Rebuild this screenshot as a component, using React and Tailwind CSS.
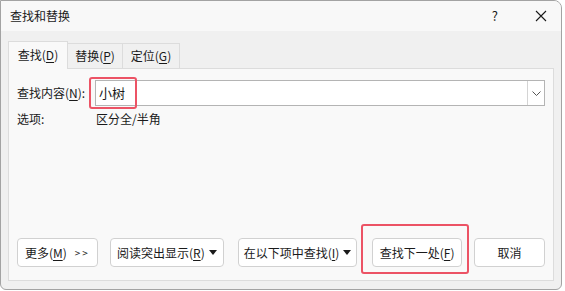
import React from "react";

const font = { fontFamily: '"Microsoft YaHei UI", "Noto Sans CJK SC", "Noto Sans", sans-serif' };

function Key({ children }) {
    return <span className="underline underline-offset-2">{children}</span>;
}

function Caret() {
    return (
        <svg width="8" height="5" viewBox="0 0 8 5" className="ml-[4px]">
            <path d="M0 0h8L4 5z" fill="#1a1a1a" />
        </svg>
    );
}

function Btn({ className = "", children }) {
    return (
        <div className={"h-[29px] flex items-center justify-center rounded-[4px] bg-white border border-[#d1d1d1] text-[12px] text-[#1a1a1a] " + className}>
            {children}
        </div>
    );
}

export default function App() {
    return (
        <div className="w-[565px] h-[291px] bg-white overflow-hidden" style={font}>
            <div className="w-[562px] h-[290px] flex flex-col bg-[#f0f0f0] border border-[#a3a3a3] rounded-tr-[8px] rounded-b-[6px] overflow-hidden">
                {/* Title bar */}
                <div className="h-[30px] shrink-0 flex items-center bg-[#f8f8f8] pl-[9px] pr-[14px] text-[12px] text-[#1a1a1a]">
                    <span>查找和替换</span>
                    <span className="ml-auto mr-[37px] text-[13px]">?</span>
                    <svg width="12" height="12" viewBox="0 0 12 12">
                        <path d="M1 1l10 10M11 1L1 11" stroke="#1a1a1a" strokeWidth="1.1" />
                    </svg>
                </div>

                {/* Body */}
                <div className="flex-1 flex flex-col px-[7px] pt-[9px] pb-[8px]">
                    {/* Tabs */}
                    <div className="flex items-end h-[28px] text-[12px] text-[#1a1a1a]">
                        <div className="h-[28px] w-[60px] flex items-center justify-center bg-[#f9f9f9] border border-b-0 border-[#dcdcdc] relative z-10 -mb-px pb-[2px]">
                            查找(<Key>D</Key>)
                        </div>
                        <div className="h-[25px] w-[55px] flex items-center justify-center border-t border-r border-[#dcdcdc]">
                            替换(<Key>P</Key>)
                        </div>
                        <div className="h-[25px] w-[57px] flex items-center justify-center border-t border-r border-[#dcdcdc]">
                            定位(<Key>G</Key>)
                        </div>
                    </div>

                    {/* Panel */}
                    <div className="flex-1 flex flex-col bg-[#f9f9f9] border border-[#dcdcdc] px-[8px] pt-[11px] pb-[13px] text-[12px] text-[#1a1a1a]">
                        <div className="flex items-center h-[26px]">
                            <span className="w-[78px]">查找内容(<Key>N</Key>):</span>
                            <div className="relative flex-1 h-[26px] flex items-center bg-white border border-[#b4b4b4]">
                                <span className="pl-[3px] text-[13px]">小树</span>
                                <div className="ml-auto h-[24px] w-[17px] flex items-center justify-center border-l border-[#d4d4d4]">
                                    <svg width="9" height="5" viewBox="0 0 9 5">
                                        <path d="M0.5 0.5l4 4 4-4" fill="none" stroke="#555" strokeWidth="1" />
                                    </svg>
                                </div>
                                <div className="absolute left-[-7px] top-[-4px] w-[48px] h-[32px] border-2 border-[#ec5365] rounded-[3px]" />
                            </div>
                        </div>
                        <div className="flex items-center mt-[3px] h-[20px]">
                            <span className="w-[79px]">选项:</span>
                            <span>区分全/半角</span>
                        </div>

                        <div className="mt-auto flex items-center">
                            <Btn className="w-[82px]">
                                更多(<Key>M</Key>)<span className="ml-[8px] text-[10px] tracking-[2px]">&gt;&gt;</span>
                            </Btn>
                            <Btn className="w-[116px] ml-[12px]">
                                阅读突出显示(<Key>R</Key>)<Caret />
                            </Btn>
                            <Btn className="w-[121px] ml-[14px]">
                                在以下项中查找(<Key>I</Key>)<Caret />
                            </Btn>
                            <div className="relative ml-[15px]">
                                <Btn className="w-[90px] border-[#0063b1]">
                                    查找下一处(<Key>F</Key>)
                                </Btn>
                                <div className="absolute left-[-11px] top-[-14px] w-[108px] h-[50px] border-2 border-[#ec5365] rounded-[3px]" />
                            </div>
                            <Btn className="w-[72px] ml-[12px]">取消</Btn>
                        </div>
                    </div>
                </div>
            </div>
        </div>
    );
}
